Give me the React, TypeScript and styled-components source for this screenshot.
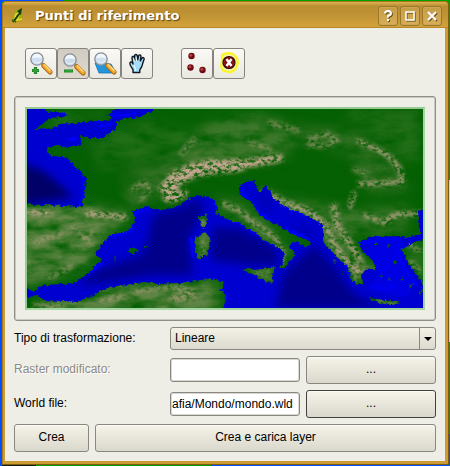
import React, { useState } from 'react';
import styled, { createGlobalStyle, css } from 'styled-components';

const GlobalStyle = createGlobalStyle`
  * { box-sizing: border-box; }
  body {
    margin: 0;
    min-height: 100vh;
    padding: 1px 1px 1px 2px;
    font-family: "Liberation Sans", Arial, sans-serif;
    font-size: 12px;
    line-height: 16px;
    color: #000;
    background:
      linear-gradient(90deg, #0050ff 2px, transparent 2px),
      linear-gradient(90deg, #0050ff 64px, #00a000 64px) top / 100% 2px no-repeat,
      linear-gradient(90deg, #102010 36px, #00a000 36px 47%, #0050ff 47%) bottom / 100% 3px no-repeat,
      linear-gradient(180deg, #00a400 180px, #d6d2c0 180px 342px, #00a400 342px 434px, #0050ff 434px);
  }
`;

const Window = styled.main`
  display: flex;
  flex-direction: column;
  border: 1px solid #a4771c;
  border-right-color: #7d5a16;
  border-bottom-color: #7d5a16;
  border-radius: 4px 4px 0 0;
  background: #cc9c34;
  padding: 0 3px 3px 2px;
`;

const TitleBar = styled.header`
  display: flex;
  align-items: center;
  gap: 10px;
  height: 26px;
  margin: 0 -3px 0 -2px;
  padding: 2px 6px 0 8px;
  border-radius: 4px 4px 0 0;
  border-bottom: 1px solid #b98a28;
  background: linear-gradient(#e0b355 0, #b98e30 4px, #bc9033 10px, #d2a139 100%);
`;

const Title = styled.h1`
  flex: 1;
  margin: 0;
  font: bold 13px/20px "DejaVu Sans", sans-serif;
  color: #fff;
  text-shadow: 1px 1px 1px #5a430f;
  white-space: nowrap;
`;

const WindowActions = styled.div`
  display: flex;
  gap: 2px;
`;

const WindowButton = styled.button`
  display: grid;
  place-items: center;
  width: 20px;
  height: 20px;
  padding: 0;
  border: 1px solid #9c772a;
  border-radius: 3px;
  background: linear-gradient(#c39c48, #d9ae58);
  box-shadow: inset 0 0 0 1px #cda755;
`;

const Content = styled.div`
  display: flex;
  flex-direction: column;
  gap: 6px;
  padding: 20px 9px 9px;
  background: #eeede6;
`;

const Toolbar = styled.div`
  display: flex;
  gap: 28px;
  padding: 0 11px 11px;
`;

const ToolGroup = styled.div`
  display: flex;
`;

const ToolButton = styled.button<{ $active?: boolean }>`
  width: 32px;
  height: 31px;
  padding: 0;
  border: 1px solid #85847d;
  border-radius: 3px;
  background: ${p => (p.$active ? 'linear-gradient(#d0ccc1, #dedad0)' : 'linear-gradient(#faf9f5, #e9e8e1)')};
  svg { display: block; }
`;

const MapFrame = styled.section`
  padding: 10px;
  border: 1px solid #8f8e88;
  border-radius: 3px;
  box-shadow: inset 0 0 0 1px #c9c8c2;
`;

const MapBorder = styled.div`
  border: 2px solid #a3d6a2;
  border-top-color: #93cb92;
  border-left-color: #93cb92;
  background: #005f00;
  svg { display: block; width: 100%; height: auto; }
`;

const Form = styled.form`
  display: flex;
  flex-direction: column;
  gap: 6px;
`;

const Row = styled.div`
  display: grid;
  grid-template-columns: 150px 1fr 1fr;
  gap: 6px;
  align-items: center;
`;

const Label = styled.label<{ $disabled?: boolean }>`
  padding-bottom: 2px;
  white-space: nowrap;
  ${p => p.$disabled && css`
    color: #8b8a84;
    text-shadow: 1px 1px 0 #fff;
  `}
`;

const frame = css`
  border: 1px solid #898880;
  border-radius: 3px;
  font: inherit;
  color: #000;
`;

const SelectWrap = styled.div`
  position: relative;
  grid-column: span 2;
  display: flex;
`;

const Select = styled.select`
  ${frame}
  appearance: none;
  width: 100%;
  height: 23px;
  padding: 0 20px 1px 4px;
  background: linear-gradient(#f4f1e6, #dcd9cf);
`;

const SelectArrow = styled.span`
  position: absolute;
  inset: 1px 1px 1px auto;
  width: 16px;
  display: grid;
  place-items: center;
  border-left: 1px solid #898880;
  pointer-events: none;
`;

const Input = styled.input`
  ${frame}
  width: 100%;
  min-width: 0;
  height: 24px;
  padding: 0 1px 1px;
  background: #fff;
  box-shadow: inset 0 0 0 1px #d8d7d1;
`;

const Button = styled.button<{ $focused?: boolean }>`
  ${frame}
  height: 28px;
  padding: 0 8px 2px;
  background: linear-gradient(#f6f3e8, #dad7cc);
  box-shadow: inset 0 1px 0 #fbfaf4;
  ${p => p.$focused && css`border-color: #42413d;`}
`;

const Actions = styled.div`
  display: grid;
  grid-template-columns: 75px 1fr;
  gap: 6px;
`;

function Lens({ x, y }: { x: number; y: number }) {
  return (
    <g transform={`translate(${x} ${y})`}>
      <path d="M4.8 4.8 7 7" stroke="#777" strokeWidth="2" />
      <path d="m6.7 6.7 6.4 6.4" stroke="#a96817" strokeWidth="5" strokeLinecap="round" />
      <path d="m7 6.6 6 6" stroke="#f2a92e" strokeWidth="3.6" strokeLinecap="round" />
      <path d="m7.6 5.9 5.4 5.4" stroke="#ffe08a" strokeWidth="1.3" strokeLinecap="round" />
      <circle r="6.2" fill="#cbdcef" fillOpacity=".88" stroke="#8a8d92" strokeWidth="1.3" />
      <path d="M-4.8-.5A4.8 4.8 0 0 1 4.8-.5Q0-2.5-4.8-.5Z" fill="#f1f7fd" />
      <path d="M-4.2 2Q0 5.8 4.2 2" fill="none" stroke="#e6f0fb" />
    </g>
  );
}

const ZoomInIcon = () => (
  <svg width="30" height="29" viewBox="0 0 30 29">
    <Lens x={11} y={10} />
    <path d="M9.5 18v7M6 21.5h7" stroke="#17791e" strokeWidth="3.2" />
    <path d="M9.5 18.5v6M6.5 21.5h6" stroke="#35a13a" strokeWidth="1.8" />
  </svg>
);

const ZoomOutIcon = () => (
  <svg width="30" height="29" viewBox="0 0 30 29">
    <Lens x={12} y={11} />
    <path d="M6 22h9" stroke="#178521" strokeWidth="3" />
    <path d="M6.5 22h8" stroke="#3aab42" strokeWidth="1.2" />
  </svg>
);

const ZoomLayerIcon = () => (
  <svg width="30" height="29" viewBox="0 0 30 29">
    <path d="M5 14 9 24h17l-5-9Z" fill="#2196d8" stroke="#1674b5" strokeWidth=".8" />
    <Lens x={11} y={10} />
  </svg>
);

const HandIcon = () => (
  <svg width="30" height="29" viewBox="0 0 30 29">
    <path
      d="M11 23.5v-3C9 18 7.500 15.500 8 13.800c.7-1.500 2.300-.8 3 1.200L10 9.500c-.5-2.500 1.700-3 2.400-.8l.7 2.500-.4-4c-.2-2.200 2.300-2.300 2.600-.2l.5 3.700.7-3.600c.5-2 2.700-1.300 2.400.5l-.6 4.200 1.500-2.500c1.200-1.600 3-.3 2.200 1.300-1.600 3.500-1.400 6.300-3 8.400l-1.200 1.700v2.800Z"
      fill="#a5dcfa" stroke="#101820" strokeWidth="1.4" strokeLinejoin="round"
    />
    <path d="M12 16q1.500 3 1.500 6M11.500 9.500l1 3M14 8l.5 4" stroke="#edfaff" strokeWidth="1.1" fill="none" />
  </svg>
);

const PointsIcon = () => (
  <svg width="30" height="29" viewBox="0 0 30 29">
    {[[9.5, 7], [8.5, 18.5], [20.5, 21]].map(([x, y]) => (
      <g key={x}>
        <circle cx={x} cy={y} r="3.2" fill="#6e0b10" />
        <circle cx={x - 0.6} cy={y - 0.8} r="1.5" fill="#b04347" />
      </g>
    ))}
  </svg>
);

const DeletePointIcon = () => (
  <svg width="30" height="29" viewBox="0 0 30 29">
    <path d="M8 6q5-3 11-1l4 4 1 5-3 7-5 2.5-7-2-2-4.5L8 12Z" fill="#f4f0a8" stroke="#fbf623" strokeWidth="2.2" strokeLinejoin="round" />
    <circle cx="15" cy="13.5" r="6" fill="#8b1015" stroke="#30080a" strokeWidth="1.2" />
    <path d="m12.500 10 5 7m0-7-5 7" stroke="#fff" strokeWidth="2.3" />
  </svg>
);

const AppIcon = () => (
  <svg width="14" height="16" viewBox="0 0 14 16">
    <path d="M4 3 8 1l3 3 1 5-3 5H4L1 11Z" fill="#a5a718" />
    <path d="M3 13 5 6l4-1-3 7 5-1" fill="none" stroke="#e7dc28" strokeWidth="1.5" />
    <path d="m2 14 7-9" stroke="#173c0d" strokeWidth="2" />
    <path d="m6 3 5-3-1 7-2-2Z" fill="#0b420f" />
    <path d="m1 12 4 2" stroke="#336813" strokeWidth="1.5" />
  </svg>
);

const ATLANTIC =
  'M20 100H39L47 112 57 112 67 114 64 117 49 118 46 121 39 127 34 130 39 130 51 128 57 127 59 124 81 123 94 121 106 121 113 118 106 116 114 110 116 100H160L156 109 147 113 139 117 124 119 117 121 117 128 102 138 86 138 80 135 81 145 67 147 57 145 46 148 49 155 67 158 74 165 82 173 86 177 85 192 82 207 64 206 44 205 20 204Z';

const MEDITERRANEAN =
  'M20 285 27 288 34 292 39 287 47 285 74 283 82 277 89 272 101 261 95 253 104 242 111 235 131 230 135 218 133 211 147 206 161 210 174 208 187 200 197 195 213 199 218 208 216 214 227 219 234 222 239 222 245 228 257 233 263 240 275 245 283 252 285 260 280 268 285 268 292 258 296 255 289 247 292 242 300 243 308 247 311 243 302 238 285 230 280 226 270 222 260 215 258 213 252 203 240 195 239 187 245 182 255 181 256 187 260 192 265 185 271 192 273 198 280 203 287 208 307 215 323 225 323 242 337 257 348 267 350 277 357 285 363 283 362 274 366 270 377 269 372 260 363 252 358 242 370 237 400 236 407 238 420 234 420 228 418 212 430 204V238L412 243 402 250 407 260 413 270 420 280 430 292V315H222L226 297 221 290 224 283 214 278 201 280 187 282 157 284 144 282 121 286 104 289 94 295 77 302 61 301 44 300 36 295 20 300Z';

const ISLANDS =
  'M199 217 204 216 206 212 207 223 204 228 201 226ZM194 237 199 236 205 232 210 238 208 255 201 257 198 259 195 250ZM127 251 133 247 138 251 133 254ZM142 248 145 246 149 248ZM113 258 116 257 115 260ZM243 270 248 268 255 270 275 267 272 275 273 283 262 280 254 275ZM370 298 378 299 386 300 401 303 390 305 380 303 371 301ZM353 257 365 262 376 268 373 270 361 264ZM400 250 407 247 404 252ZM393 260 397 261 396 264ZM388 278 391 279 389 281ZM381 274 384 276 382 278ZM400 279 404 277 402 281ZM408 286 413 284 410 289ZM418 293 422 288 421 295ZM334 259 337 262 335 264ZM342 272 344 274 342 275ZM386 244 390 245 388 247ZM375 241 378 243 375 245Z';

function TerrainMap() {
  return (
    <svg viewBox="27 109 396 199" role="img" aria-label="Europa meridionale e Mediterraneo">
      <defs>
        <filter id="coast" x="-5%" y="-5%" width="110%" height="110%">
          <feTurbulence type="fractalNoise" baseFrequency=".28" numOctaves="3" seed="8" />
          <feDisplacementMap in="SourceGraphic" scale="5" xChannelSelector="R" yChannelSelector="G" />
        </filter>
        <filter id="relief" filterUnits="userSpaceOnUse" x="20" y="100" width="410" height="215">
          <feGaussianBlur in="SourceGraphic" stdDeviation="2" result="soft" />
          <feTurbulence type="fractalNoise" baseFrequency=".22 .3" numOctaves="4" seed="12" />
          <feColorMatrix values="0 0 0 0 0  0 0 0 0 0  0 0 0 0 0  4 0 0 0 -1.3" result="grain" />
          <feComposite in="soft" in2="grain" operator="in" />
        </filter>
        <filter id="haze" filterUnits="userSpaceOnUse" x="20" y="100" width="410" height="215">
          <feGaussianBlur in="SourceGraphic" stdDeviation="6" result="soft" />
          <feTurbulence type="fractalNoise" baseFrequency=".04 .09" numOctaves="5" seed="5" />
          <feColorMatrix values="0 0 0 0 0  0 0 0 0 0  0 0 0 0 0  2 0 0 0 -.3" result="grain" />
          <feComposite in="soft" in2="grain" operator="in" />
        </filter>
        <filter id="depth" x="-20%" y="-20%" width="140%" height="140%">
          <feGaussianBlur stdDeviation="4" />
        </filter>
        <mask id="water" maskUnits="userSpaceOnUse" x="20" y="100" width="410" height="215">
          <g filter="url(#coast)">
            <path d={ATLANTIC + MEDITERRANEAN} fill="#fff" />
            <path d={ISLANDS} fill="#000" />
          </g>
        </mask>
      </defs>

      <path d="M27 109h396v199H27Z" fill="#056003" />

      <g filter="url(#haze)">
        <path d="M20 204h67l45 10-26 22-20 32-66 18ZM40 302 110 286l110-6-5 35H40Z" fill="#5f8444" />
        <path d="m205 122 60-8 35 16-14 28-60 12-40-2ZM262 190l45 12 55 8 50-4-10 26-50 5-10 40-26-40-52-34ZM218 196l30 10 36 30 8 28-12-12-56-32Z" fill="#55803c" opacity=".7" />
        <path d="M125 175l40-15 40-25 12 15-30 35-60 25ZM290 125l60 5 50 35 10 25-40 5-20-40-50-15Z" fill="#4f7c38" opacity=".6" />
        <path d="M90 140l50-20 60 10-20 25-80 15ZM340 110h80v60l-30-20ZM50 114l60-2-15 8-45 8ZM405 240h25v60l-25-30Z" fill="#3c7a2c" opacity=".55" />
        <path d="M197 210h13v50h-15ZM241 264h34v22ZM345 255l20 32 14-20ZM368 298h34v8Z" fill="#5f8040" />
      </g>

      <g filter="url(#relief)" fill="none" stroke="#c2a58e" strokeLinecap="round" strokeLinejoin="round">
        <path d="m169 196 5-15 16-9 24-5 26-2" strokeWidth="13" />
        <path d="m215 167 30-3 34-6M163 188l11-13 18-8 24-4M174 198l10-4" strokeWidth="8" />
        <path d="m87 213 15 2 23 2M28 212l22 1" strokeWidth="5" />
        <path d="m223 203 17 8 14 12 20 14 9 14-2 13" strokeWidth="4" opacity=".9" />
        <path d="m264 192 20 11 25 9 16 13 8 18 14 19 12 10M334 207l3 18 14 21 10 16" strokeWidth="7" opacity=".8" />
        <path d="m359 184 26-1 18-1-3-12-9-12-16-10-17-7M350 207l4-14M365 215l18 8 12-8 25-2" strokeWidth="4" />
        <path d="m309 139 18-5 11 6-13 6-17-1M354 169l12 5" strokeWidth="4" opacity=".7" />
        <path d="m132 190 12-8 6 7-9 11M270 123l28 8M250 142l20 8M181 154l14-16M35 242l27-9M72 227l20 16M50 278l22-12M82 240l11-8" strokeWidth="4" opacity=".65" />
        <path d="m135 292 30-5 30 4-25 8M34 305l30 2M100 301l24-4M178 300l22-3M357 269l-4 12M407 243l14 9M410 261l10 10" strokeWidth="4" opacity=".65" />
        <path d="m203 220 1 5M204 239l-1 14M255 273l14 1M377 300l17 3" strokeWidth="3" opacity=".7" />
      </g>

      <g mask="url(#water)">
        <path d="M27 109h396v199H27Z" fill="#0000d0" />
        <g filter="url(#depth)" fill="#00008b">
          <path d="M20 162 45 172 66 190 73 198 42 202 20 205Z" fill="#000068" />
          <path d="m154 214 37-9 10 10-13 25 5 35-42 0-50 8-24 3 22-17 45-15Z" />
          <path d="m213 227 27 2 35 19 5 17-30 0-39-5ZM284 273l30-28 23 25 17 24 30 14H275Z" />
          <path d="m255 188 18 15-6 10ZM290 222l25 8-5 10Z" opacity=".5" />
          <path d="m183 204 18-5 4 14ZM325 264l14 18-5 14-20 0Z" />
        </g>
        <g filter="url(#coast)" fill="none" stroke="#0000f4" strokeWidth="3">
          <path d="M49 153 67 158 74 165 82 173 84 190 80 205M96 121l20-6 20 0M98 127l14-4M67 140l10-2" />
          <path d="M227 218 239 223 257 234 276 246M110 237l22-6 3-18 14-4M88 274l15-12M213 197l5 14 9 7M224 284l-2 9 4 5-2 10M191 238l3 20M325 242l22 24 6 20" />
          <path d="M362 243l16-3 20-1M366 254l15 18 8-6M370 285l14 4 13-4M396 244l7 20 14 22M241 190l16 22 15 9M280 204l25 12M285 229l23 10" />
        </g>
        <path filter="url(#coast)" d="M371 239h31l2 28 12 17-12 13-34-7 8-18-10-20Z" fill="#0000ee" opacity=".6" />
      </g>
    </svg>
  );
}

export default function App() {
  const [tool, setTool] = useState('zoom-out');
  const [worldFile, setWorldFile] = useState('afia/Mondo/mondo.wld');
  const tools = [
    [
      { id: 'zoom-in', label: 'Ingrandisci', Icon: ZoomInIcon },
      { id: 'zoom-out', label: 'Rimpicciolisci', Icon: ZoomOutIcon },
      { id: 'zoom-layer', label: 'Zoom sul layer', Icon: ZoomLayerIcon },
      { id: 'pan', label: 'Sposta', Icon: HandIcon },
    ],
    [
      { id: 'add', label: 'Aggiungi punto', Icon: PointsIcon },
      { id: 'delete', label: 'Elimina punto', Icon: DeletePointIcon },
    ],
  ];

  return (
    <>
      <GlobalStyle />
      <Window>
        <TitleBar>
          <AppIcon />
          <Title>Punti di riferimento</Title>
          <WindowActions>
            <WindowButton aria-label="Aiuto">
              <svg width="14" height="14" viewBox="0 0 14 14" fill="none">
                <path d="M5 5.500Q5 3 8 3t3 2.500Q11 7 8 8v1.500M8 11v2" stroke="#6d5117" strokeWidth="2" />
                <path d="M4 4.500Q4 2 7 2t3 2.500Q10 6 7 7v1.500M7 10v2" stroke="#fff" strokeWidth="2" />
              </svg>
            </WindowButton>
            <WindowButton aria-label="Ingrandisci finestra">
              <svg width="14" height="14" viewBox="0 0 14 14" fill="none">
                <path d="M4 4h8v8H4Z" stroke="#7c6020" strokeWidth="1.5" />
                <path d="M3 3h8v8H3Z" stroke="#fff" strokeWidth="1.5" />
              </svg>
            </WindowButton>
            <WindowButton aria-label="Chiudi">
              <svg width="14" height="14" viewBox="0 0 14 14" fill="none">
                <path d="m4 4 8 8m0-8-8 8" stroke="#6d5117" strokeWidth="2" />
                <path d="m3 3 8 8m0-8-8 8" stroke="#fff" strokeWidth="2.2" />
              </svg>
            </WindowButton>
          </WindowActions>
        </TitleBar>
        <Content>
          <Toolbar role="toolbar">
            {tools.map((group, i) => (
              <ToolGroup key={i}>
                {group.map(({ id, label, Icon }) => (
                  <ToolButton
                    key={id}
                    type="button"
                    aria-label={label}
                    aria-pressed={tool === id}
                    $active={tool === id}
                    onClick={() => setTool(id)}
                  >
                    <Icon />
                  </ToolButton>
                ))}
              </ToolGroup>
            ))}
          </Toolbar>
          <MapFrame>
            <MapBorder>
              <TerrainMap />
            </MapBorder>
          </MapFrame>
          <Form onSubmit={e => e.preventDefault()}>
            <Row>
              <Label htmlFor="transform">Tipo di trasformazione:</Label>
              <SelectWrap>
                <Select id="transform" defaultValue="Lineare">
                  <option>Lineare</option>
                </Select>
                <SelectArrow>
                  <svg width="8" height="4" viewBox="0 0 8 4"><path d="M0 0h8L4 4Z" /></svg>
                </SelectArrow>
              </SelectWrap>
            </Row>
            <Row>
              <Label htmlFor="raster" $disabled>Raster modificato:</Label>
              <Input id="raster" type="text" disabled />
              <Button type="button" aria-label="Sfoglia raster" disabled>...</Button>
            </Row>
            <Row>
              <Label htmlFor="world">World file:</Label>
              <Input id="world" type="text" value={worldFile} onChange={e => setWorldFile(e.target.value)} />
              <Button type="button" aria-label="Sfoglia world file" $focused>...</Button>
            </Row>
            <Actions>
              <Button type="submit">Crea</Button>
              <Button type="button">Crea e carica layer</Button>
            </Actions>
          </Form>
        </Content>
      </Window>
    </>
  );
}
